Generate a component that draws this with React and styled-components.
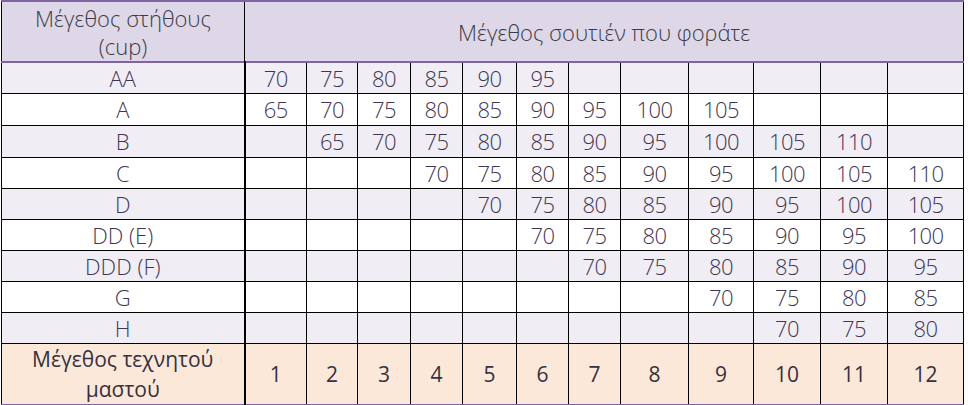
import React from 'react'
import styled, { createGlobalStyle } from 'styled-components'

const GlobalStyle = createGlobalStyle`
body {
  margin: 0;
  background: #fff;
  font-family: "Open Sans", "Noto Sans", sans-serif;
}
`

const Wrap = styled.div`
padding-left: 1px;
`

const Table = styled.table`
width: 962px;
border-collapse: collapse;
table-layout: fixed;
border-left: 1px solid #000;
border-right: 1px solid #000;
border-top: 2px solid #8064a2;
border-bottom: 2px solid #8064a2;
font-size: 22px;
font-weight: 300;
color: #3f3552;
`

const HeadRow = styled.tr`
height: 61px;
background: #ddd7e8;
border-bottom: 2px solid #8064a2;
`

const HeadCell = styled.th`
font-weight: 300;
color: #3d3b45;
text-align: center;
vertical-align: middle;
line-height: 28px;
padding: 0 2px;
border-right: 1px solid #000;
white-space: nowrap;
&:last-child {
  border-right: none;
}
`

const Row = styled.tr`
height: ${p => p.$h}px;
background: ${p => (p.$shade ? '#f0edf5' : '#fff')};
border-bottom: 1px solid #000;
`

const Cell = styled.td`
text-align: center;
vertical-align: middle;
padding: 0;
line-height: 24px;
letter-spacing: ${p => (p.$first ? '0' : '-0.6px')};
border-right: ${p => (p.$first ? '2px' : '1px')} solid #000;
white-space: nowrap;
`

const FootRow = styled.tr`
height: 60px;
background: #fce8d9;
`

const FootCell = styled.td`
text-align: center;
vertical-align: middle;
padding: 0 2px;
line-height: 30px;
font-size: 21px;
font-weight: 400;
color: #35313f;
white-space: nowrap;
border-right: ${p => (p.$first ? '2px' : '1px')} solid #000;
`

const widths = [243, 62, 51, 53, 52, 54, 52, 52, 68, 65, 67, 67, 76]

const rows = [
  { cup: 'AA', start: 1, values: [70, 75, 80, 85, 90, 95] },
  { cup: 'A', start: 1, values: [65, 70, 75, 80, 85, 90, 95, 100, 105] },
  { cup: 'B', start: 2, values: [65, 70, 75, 80, 85, 90, 95, 100, 105, 110] },
  { cup: 'C', start: 4, values: [70, 75, 80, 85, 90, 95, 100, 105, 110] },
  { cup: 'D', start: 5, values: [70, 75, 80, 85, 90, 95, 100, 105] },
  { cup: 'DD (E)', start: 6, values: [70, 75, 80, 85, 90, 95, 100] },
  { cup: 'DDD (F)', start: 7, values: [70, 75, 80, 85, 90, 95] },
  { cup: 'G', start: 9, values: [70, 75, 80, 85] },
  { cup: 'H', start: 10, values: [70, 75, 80] },
]

const heights = [31, 32, 32, 31, 31, 31, 31, 31, 31]

const App = () => {
  return (
    <>
      <GlobalStyle />
      <Wrap>
        <Table>
          <colgroup>
            {widths.map((w, i) => (
              <col key={i} style={{ width: w }} />
            ))}
          </colgroup>
          <thead>
            <HeadRow>
              <HeadCell>Μέγεθος στήθους<br />(cup)</HeadCell>
              <HeadCell colSpan={12}>Μέγεθος σουτιέν που φοράτε</HeadCell>
            </HeadRow>
          </thead>
          <tbody>
            {rows.map((r, ri) => (
              <Row key={r.cup} $shade={ri % 2 === 0} $h={heights[ri]}>
                <Cell $first>{r.cup}</Cell>
                {Array.from({ length: 12 }, (_, i) => {
                  const col = i + 1
                  const v = col >= r.start ? r.values[col - r.start] : undefined
                  return <Cell key={col}>{v ?? ''}</Cell>
                })}
              </Row>
            ))}
            <FootRow>
              <FootCell $first>Μέγεθος τεχνητού<br />μαστού</FootCell>
              {Array.from({ length: 12 }, (_, i) => (
                <FootCell key={i}>{i + 1}</FootCell>
              ))}
            </FootRow>
          </tbody>
        </Table>
      </Wrap>
    </>
  )
}

export default App
